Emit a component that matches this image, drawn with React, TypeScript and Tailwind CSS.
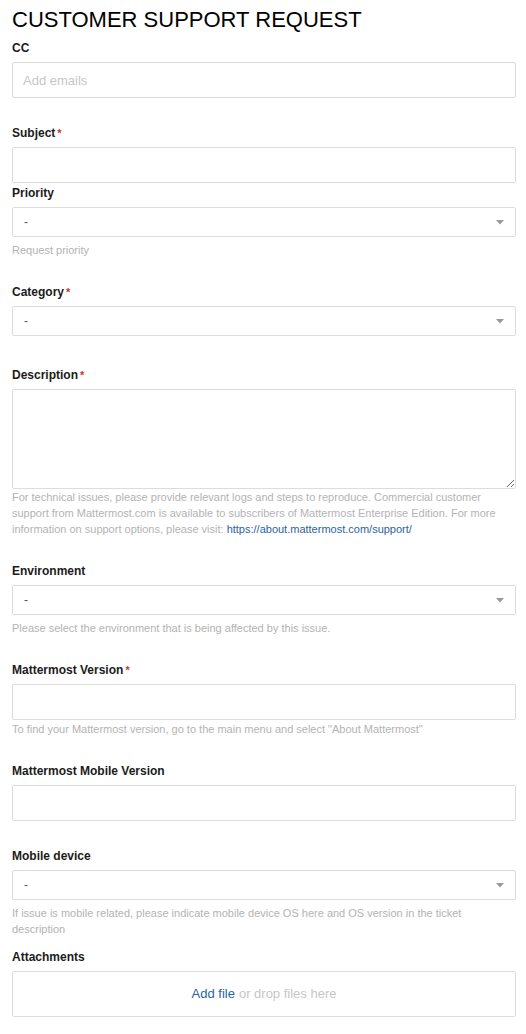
const font = { fontFamily: '"Liberation Sans", Arial, Helvetica, sans-serif' };

function Label({ text, required }: { text: string; required?: boolean }) {
  return (
    <div className="text-[12px] leading-4 font-bold text-[#1b1b1b]">
      {text}
      {required && <span className="ml-[2px] text-[11px] align-top text-[#d0312d]">*</span>}
    </div>
  );
}

function Hint({ children }: { children: React.ReactNode }) {
  return <div className="mt-[5px] text-[11px] leading-4 text-[#b3b3b3]">{children}</div>;
}

function TextBox({ placeholder }: { placeholder?: string }) {
  return (
    <div className="mt-[6px] h-[36px] border border-[#dcdcdc] rounded-[2px] bg-white flex items-center px-[10px] pt-[1px]">
      <span className="text-[13px] text-[#c6c6c6]">{placeholder}</span>
    </div>
  );
}

function Select() {
  return (
    <div className="mt-[6px] h-[30px] border border-[#dcdcdc] rounded-[2px] bg-white flex items-center justify-between pl-[11px] pr-[11px]">
      <span className="text-[12px] text-[#555]">-</span>
      <svg width="8" height="5" viewBox="0 0 8 5">
        <path d="M0 0 L8 0 L4 4.5 Z" fill="#999" />
      </svg>
    </div>
  );
}

export default function App() {
  return (
    <div className="bg-white min-h-[1034px] pl-3 pr-[10px]" style={font}>
      <h1 className="pt-[6px] text-[22px] leading-7 font-normal text-black">CUSTOMER SUPPORT REQUEST</h1>

      <div className="mt-[6px]">
        <Label text="CC" />
        <TextBox placeholder="Add emails" />
      </div>

      <div className="mt-[27px]">
        <Label text="Subject" required />
        <TextBox />
      </div>

      <div className="mt-[2px]">
        <Label text="Priority" />
        <Select />
        <Hint>Request priority</Hint>
      </div>

      <div className="mt-[26px]">
        <Label text="Category" required />
        <Select />
      </div>

      <div className="mt-[31px]">
        <Label text="Description" required />
        <textarea className="mt-[6px] block w-full h-[100px] border border-[#dcdcdc] rounded-[2px] resize-y outline-none" />
        <p className="text-[11px] leading-4 text-[#b3b3b3] pr-[10px]">
          For technical issues, please provide relevant logs and steps to reproduce. Commercial customer support from
          Mattermost.com is available to subscribers of Mattermost Enterprise Edition. For more information on support
          options, please visit: <a className="text-[#2a64a0]">https://about.mattermost.com/support/</a>
        </p>
      </div>

      <div className="mt-[26px]">
        <Label text="Environment" />
        <Select />
        <Hint>Please select the environment that is being affected by this issue.</Hint>
      </div>

      <div className="mt-[26px]">
        <Label text="Mattermost Version" required />
        <TextBox />
        <div className="mt-[1px] text-[11px] leading-4 text-[#b3b3b3]">
          To find your Mattermost version, go to the main menu and select "About Mattermost"
        </div>
      </div>

      <div className="mt-[26px]">
        <Label text="Mattermost Mobile Version" />
        <TextBox />
      </div>

      <div className="mt-[27px]">
        <Label text="Mobile device" />
        <Select />
        <Hint>If issue is mobile related, please indicate mobile device OS here and OS version in the ticket description</Hint>
      </div>

      <div className="mt-[12px]">
        <Label text="Attachments" />
        <div className="mt-[6px] h-[46px] border border-[#dcdcdc] rounded-[2px] flex items-center justify-center text-[13px]">
          <span className="text-[#2a64a0]">Add file</span>
          <span className="ml-1 text-[#c6c6c6]">or drop files here</span>
        </div>
      </div>
    </div>
  );
}
